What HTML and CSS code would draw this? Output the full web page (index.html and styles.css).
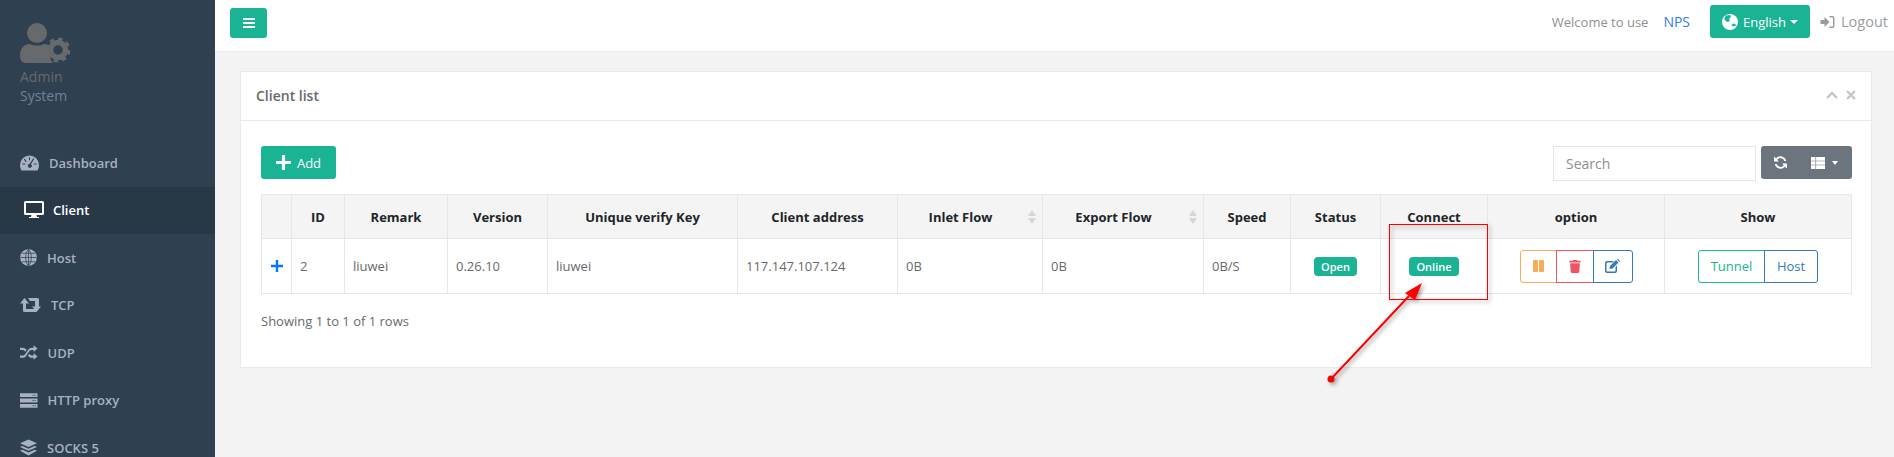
FILE: index.html
```html
<!DOCTYPE html>
<html lang="en">
<head>
  <meta charset="UTF-8" />
  <title>Client list</title>
  <link rel="stylesheet" href="styles.css">
</head>
<body>
  <!-- sidebar -->
  <aside class="sidebar">
    <div class="profile">
      <svg class="logo" viewBox="0 0 50 40">
        <circle cx="17" cy="10" r="10" fill="#676a6c"/>
        <path d="M0 33c0-8 4-12 10-12 4 2 10 2 14 0 3 0 6 1 8 3-3 5-3 11 1 16H6c-4 0-6-3-6-7z" fill="#676a6c"/>
        <circle cx="38" cy="27" r="7.5" fill="none" stroke="#676a6c" stroke-width="5.5"/>
        <circle cx="38" cy="27" r="11" fill="none" stroke="#676a6c" stroke-width="3" stroke-dasharray="4.4 4.2"/>
      </svg>
      <div class="profile-name">Admin</div>
      <div class="profile-role">System</div>
    </div>
    <ul class="menu">
      <li class="menu-item">
        <svg class="menu-icon" viewBox="0 0 20 16"><path fill-rule="evenodd" d="M10 0a10 10 0 0 1 10 10c0 2-.5 4-1.500 6H1.500C.5 14 0 12 0 10A10 10 0 0 1 10 0zM9.500 2v3h1V2zM5 3.500 4 4.200 6 7l1-.7zM15 3.500 11.500 9.300a2 2 0 1 1-1.500-.3L14 3zM2.500 8.500v1h3v-1zM14.500 8.500v1h3v-1z"/></svg>
        <span>Dashboard</span>
      </li>
      <li class="menu-item active">
        <svg class="menu-icon desktop" viewBox="0 0 20 18"><path fill-rule="evenodd" d="M1.500 0h17A1.500 1.500 0 0 1 20 1.500v11a1.500 1.500 0 0 1-1.500 1.500H12.500l.5 2h2v1H5v-1h2l.5-2h-6A1.500 1.500 0 0 1 0 12.500v-11A1.500 1.500 0 0 1 1.500 0zM2 2v10h16V2z"/></svg>
        <span>Client</span>
      </li>
      <li class="menu-item">
        <svg class="menu-icon globe" viewBox="0 0 18 18"><circle cx="9" cy="9" r="8.800"/><path d="M9 .5v17M.5 9h17M2 4.500h14M2 13.500h14M9 .5C5 4 5 14 9 17.500M9 .5c4 3.500 4 13.500 0 17" fill="none" stroke="#2f4050" stroke-width=".8"/></svg>
        <span>Host</span>
      </li>
      <li class="menu-item">
        <svg class="menu-icon retweet" viewBox="0 0 21 14"><path d="M0 5.500 4.500 0 9 5.500H6V11h9l2 3H4.500A1.500 1.500 0 0 1 3 12.500V5.500zM21 8.500 16.500 14 12 8.500h3V3H10L8 0h9.500A1.500 1.500 0 0 1 19 1.500v7z"/></svg>
        <span>TCP</span>
      </li>
      <li class="menu-item">
        <svg class="menu-icon random" viewBox="0 0 18 15"><path d="M14 0l4 3.500L14 7V5h-2c-2 0-3 2-4 3.500S5.500 13 3 13H0v-2.500h3c1.500 0 2.500-1.500 3.500-3S9 2.500 12 2.500h2zM0 2.500h3c1.600 0 2.800 1 3.800 2.200L5.300 6.800C4.600 5.800 3.900 5 3 5H0zM14 8l4 3.500-4 3.500v-2h-2c-1.600 0-2.800-1-3.800-2.200l1.500-2.100c.7 1 1.400 1.800 2.300 1.800h2z"/></svg>
        <span>UDP</span>
      </li>
      <li class="menu-item">
        <svg class="menu-icon server" viewBox="0 0 18 15"><path fill-rule="evenodd" d="M0 0h18v4H0zM13 1.500v1h1v-1zM15 1.500v1h1v-1zM0 5.500h18v4H0zM13 7v1h1V7zM15 7v1h1V7zM0 11h18v4H0zM13 12.500v1h1v-1zM15 12.500v1h1v-1z"/></svg>
        <span>HTTP proxy</span>
      </li>
      <li class="menu-item">
        <svg class="menu-icon layers" viewBox="0 0 18 17"><path d="M9 0l9 4-9 4-9-4zM2.500 6.800 9 9.700l6.500-2.900L18 8l-9 4-9-4zM2.500 10.800 9 13.700l6.500-2.900L18 12l-9 5-9-5z"/></svg>
        <span>SOCKS 5</span>
      </li>
    </ul>
  </aside>

  <div class="main">
    <!-- top bar -->
    <nav class="topbar">
      <button class="btn btn-teal btn-menu">
        <svg class="icon-bars" viewBox="0 0 12 10"><path d="M0 0h12v2H0zM0 4h12v2H0zM0 8h12v2H0z"/></svg>
      </button>
      <div class="topbar-right">
        <span class="welcome">Welcome to use</span>
        <a class="brand-link">NPS</a>
        <button class="btn btn-teal btn-lang">
          <svg class="icon-globe" viewBox="0 0 16 16"><circle cx="8" cy="8" r="8" fill="#fff"/><path d="M4 1.500 8 1l1 2-2 2 1 2-3 1-3-3zM9 11l3-1.500 2.500 1.500-3 1.500z" fill="#1ab394"/></svg>
          <span>English</span>
          <i class="caret"></i>
        </button>
        <a class="logout">
          <svg class="icon-logout" viewBox="0 0 14 12"><path d="M0 4h4V1l5 5-5 5V8H0zM9 0h3a2 2 0 0 1 2 2v8a2 2 0 0 1-2 2H9v-1.500h3a.5.5 0 0 0 .5-.5V2a.5.5 0 0 0-.5-.5H9z"/></svg>
          <span>Logout</span>
        </a>
      </div>
    </nav>

    <div class="content">
      <section class="panel">
        <div class="panel-title">
          <h5>Client list</h5>
          <div class="panel-tools">
            <svg class="tool-icon" viewBox="0 0 12 8"><path d="M1 7l5-5 5 5" fill="none" stroke="#c4c6c8" stroke-width="2.400"/></svg>
            <svg class="tool-icon tool-close" viewBox="0 0 10 10"><path d="M1 1l8 8M9 1l-8 8" fill="none" stroke="#c4c6c8" stroke-width="2.400"/></svg>
          </div>
        </div>
        <div class="panel-body">
          <div class="toolbar">
            <button class="btn btn-teal btn-add">
              <svg class="icon-plus" viewBox="0 0 448 512"><path d="M416 208H272V64c0-17.670-14.330-32-32-32h-32c-17.670 0-32 14.330-32 32v144H32c-17.670 0-32 14.330-32 32v32c0 17.670 14.330 32 32 32h144v144c0 17.670 14.330 32 32 32h32c17.670 0 32-14.330 32-32V304h144c17.670 0 32-14.330 32-32v-32c0-17.670-14.330-32-32-32z"/></svg>
              <span>Add</span>
            </button>
            <div class="toolbar-right">
              <input class="search" type="text" placeholder="Search" />
              <div class="btn-gray">
                <svg class="icon-refresh" viewBox="0 0 14 14"><path d="M12.300 5.500A5.500 5.500 0 0 0 2.800 3L1 1.500V6h4.500L3.900 4.400a3.800 3.800 0 0 1 6.600 1.100zM1.700 8.500a5.500 5.500 0 0 0 9.500 2.500L13 12.500V8H8.500l1.600 1.600a3.800 3.800 0 0 1-6.600-1.100z"/></svg>
                <svg class="icon-columns" viewBox="0 0 14 12"><path d="M0 0h4.500v3.700H0zM5.100 0H14v3.700H5.100zM0 4.200h4.500v3.600H0zM5.100 4.200H14v3.600H5.100zM0 8.300h4.500V12H0zM5.100 8.300H14V12H5.100z"/></svg>
                <i class="caret caret-small"></i>
              </div>
            </div>
          </div>

          <table class="client-table">
            <thead>
              <tr>
                <th class="col-detail"></th>
                <th class="col-id">ID</th>
                <th class="col-remark">Remark</th>
                <th class="col-version">Version</th>
                <th class="col-key">Unique verify Key</th>
                <th class="col-addr">Client address</th>
                <th class="col-inlet sortable">Inlet Flow<i class="sort"></i></th>
                <th class="col-export sortable">Export Flow<i class="sort"></i></th>
                <th class="col-speed">Speed</th>
                <th class="col-status">Status</th>
                <th class="col-connect">Connect</th>
                <th class="col-option">option</th>
                <th class="col-show">Show</th>
              </tr>
            </thead>
            <tbody>
              <tr>
                <td class="cell-detail"><svg class="icon-detail" viewBox="0 0 12 12"><path d="M4.800 0h2.400v4.800H12v2.400H7.200V12H4.800V7.200H0V4.800h4.800z"/></svg></td>
                <td>2</td>
                <td>liuwei</td>
                <td>0.26.10</td>
                <td>liuwei</td>
                <td>117.147.107.124</td>
                <td>0B</td>
                <td>0B</td>
                <td>0B/S</td>
                <td class="cell-center"><span class="badge">Open</span></td>
                <td class="cell-center"><span class="badge">Online</span></td>
                <td class="cell-center">
                  <div class="btn-group">
                    <button class="btn-line line-orange">
                      <svg class="icon-pause" viewBox="0 0 11 12"><path d="M0 1a1 1 0 0 1 1-1h3a1 1 0 0 1 1 1v10a1 1 0 0 1-1 1H1a1 1 0 0 1-1-1zM6 1a1 1 0 0 1 1-1h3a1 1 0 0 1 1 1v10a1 1 0 0 1-1 1H7a1 1 0 0 1-1-1z"/></svg>
                    </button>
                    <button class="btn-line line-red">
                      <svg class="icon-trash" viewBox="0 0 448 512"><path d="M432 32H312l-9.400-18.700A24 24 0 0 0 281.100 0H166.800a23.720 23.720 0 0 0-21.400 13.300L136 32H16A16 16 0 0 0 0 48v32a16 16 0 0 0 16 16h416a16 16 0 0 0 16-16V48a16 16 0 0 0-16-16zM53.200 467a48 48 0 0 0 47.900 45h245.800a48 48 0 0 0 47.900-45L416 128H32z"/></svg>
                    </button>
                    <button class="btn-line line-blue btn-edit">
                      <svg class="icon-edit" viewBox="0 0 15 14"><path d="M2 2h7L7.500 3.500H2.500a1 1 0 0 0-1 1v7a1 1 0 0 0 1 1h7a1 1 0 0 0 1-1V8L12 6.500V12a2 2 0 0 1-2 2H2a2 2 0 0 1-2-2V4a2 2 0 0 1 2-2zM11 1 13.500 3.500 7.500 9.500 4.500 10 5 7zM12 .5l.9-.5L15 2.100 14.400 3z"/></svg>
                    </button>
                  </div>
                </td>
                <td class="cell-center">
                  <div class="btn-group">
                    <button class="btn-line line-teal btn-tunnel">Tunnel</button>
                    <button class="btn-line line-blue btn-host">Host</button>
                  </div>
                </td>
              </tr>
            </tbody>
          </table>

          <div class="table-info">Showing 1 to 1 of 1 rows</div>
        </div>
      </section>
    </div>
  </div>

  <!-- red annotation drawn over the screenshot -->
  <svg class="annotation" viewBox="0 0 1894 457">
    <rect class="mark-box" x="1389.500" y="224.500" width="98" height="75"/>
    <path class="mark-line" d="M1331 379 1409 296"/>
    <path class="mark-head" d="M1422 283 1405 293 1409 296 1415 300z"/>
    <circle class="mark-dot" cx="1331" cy="379" r="3.500"/>
  </svg>
</body>
</html>
```

FILE: styles.css
```css
* {
  box-sizing: border-box;
}
html, body {
  height: 457px;
}
body {
  display: flex;
  margin: 0;
  overflow: hidden;
  position: relative;
  font-family: "Open Sans", "Liberation Sans", sans-serif;
  font-size: 13px;
  color: #676a6c;
  background: #f3f3f4;
}
button {
  font-family: inherit;
}

/* sidebar */
.sidebar {
  width: 215px;
  flex: none;
  background: #2f4050;
}
.profile {
  height: 139px;
  padding: 23px 0 0 20px;
  font-size: 14px;
  line-height: 19px;
}
.logo {
  display: block;
  width: 50px;
  height: 40px;
  margin-bottom: 4px;
}
.profile-name {
  color: #676a6c;
}
.profile-role {
  color: #70829a;
}
.menu {
  list-style: none;
  margin: 0;
  padding: 0;
}
.menu-item {
  display: flex;
  align-items: center;
  gap: 10px;
  height: 47.5px;
  padding-left: 20px;
  font-weight: 600;
  color: #a7b1c2;
}
.menu-item.active {
  gap: 9px;
  background: #293846;
  color: #fff;
  padding-left: 24px;
}
.menu-icon {
  width: 19px;
  height: 16px;
  flex: none;
  fill: currentColor;
}
.desktop {
  width: 20px;
  height: 18px;
}
.globe {
  width: 17px;
  height: 17px;
}
.retweet {
  width: 21px;
  height: 14px;
}
.random, .server {
  width: 17.5px;
  height: 15px;
}
.layers {
  width: 17px;
  height: 17px;
}

/* top bar */
.main {
  flex: 1;
  min-width: 0;
}
.topbar {
  display: flex;
  justify-content: space-between;
  height: 52px;
  padding: 8px 6px 0 15px;
  background: #fff;
  border-bottom: 1px solid #e7eaec;
}
.btn {
  display: flex;
  align-items: center;
  justify-content: center;
  border: none;
  border-radius: 3px;
  color: #fff;
  font-size: 13px;
}
.btn-teal {
  background: #1ab394;
}
.btn-menu {
  width: 37px;
  height: 30px;
}
.icon-bars {
  width: 12px;
  height: 10px;
  fill: #fff;
}
.topbar-right {
  display: flex;
  align-items: center;
  height: 35px;
  margin-top: -4px;
}
.welcome {
  color: #8f8f8f;
}
.brand-link {
  margin: 0 20px 0 15px;
  font-size: 14px;
  color: #2f7df6;
}
.btn-lang {
  width: 100px;
  height: 33px;
  gap: 4px;
  margin-right: 10px;
}
.icon-globe {
  width: 16px;
  height: 16px;
  margin-right: 1px;
}
.caret {
  width: 0;
  height: 0;
  border-top: 4px solid #fff;
  border-left: 4px solid transparent;
  border-right: 4px solid transparent;
}
.caret-small {
  border-left-width: 3.5px;
  border-right-width: 3.5px;
}
.logout {
  display: flex;
  align-items: center;
  gap: 6px;
  font-size: 14.5px;
  color: #999c9e;
}
.icon-logout {
  width: 15px;
  height: 12px;
  fill: #999c9e;
}

/* panel */
.content {
  padding: 19px 22px 0 25px;
}
.panel {
  height: 297px;
  background: #fff;
  border: 1px solid #e7eaec;
}
.panel-title {
  display: flex;
  align-items: center;
  justify-content: space-between;
  height: 49px;
  padding: 0 15px 2px;
  border-bottom: 1px solid #e7eaec;
}
.panel-title h5 {
  margin: 0;
  font-size: 14px;
  font-weight: 600;
  color: #676a6c;
}
.panel-tools {
  display: flex;
  align-items: center;
  gap: 8px;
}
.tool-icon {
  width: 12px;
  height: 8px;
}
.tool-close {
  width: 10px;
  height: 10px;
}
.panel-body {
  padding: 25px 19px 0 20px;
}
.toolbar {
  display: flex;
  justify-content: space-between;
  height: 48px;
}
.btn-add {
  width: 75px;
  height: 33px;
  gap: 6px;
}
.icon-plus {
  width: 15px;
  height: 17px;
  fill: #fff;
}
.toolbar-right {
  display: flex;
  gap: 5px;
}
.search {
  width: 203px;
  height: 35px;
  padding: 0 12px;
  border: 1px solid #e5e6e7;
  font: 14px "Open Sans", sans-serif;
}
.search::placeholder {
  color: #8b8f93;
}
.btn-gray {
  display: flex;
  align-items: center;
  width: 91px;
  height: 33px;
  padding-left: 12px;
  border-radius: 3px;
  background: #6c757d;
}
.icon-refresh {
  width: 15px;
  height: 15px;
  fill: #fff;
  margin-right: 23px;
}
.icon-columns {
  width: 14px;
  height: 12px;
  fill: #fff;
  margin-right: 7px;
}

/* table */
.client-table {
  width: 1590px;
  table-layout: fixed;
  border-collapse: collapse;
  border: 1px solid #e7e7e7;
}
.client-table th, .client-table td {
  border: 1px solid #e7e7e7;
  padding: 0 8px;
}
.client-table th {
  position: relative;
  height: 44px;
  background: #f4f4f4;
  color: #212529;
  font-weight: 700;
  text-align: center;
}
.client-table .sortable {
  padding-right: 27px;
}
.client-table td {
  height: 55px;
}
.col-detail { width: 30px; }
.col-id { width: 53px; }
.col-remark { width: 103px; }
.col-version { width: 100px; }
.col-key { width: 190px; }
.col-addr { width: 160px; }
.col-inlet { width: 145px; }
.col-export { width: 161px; }
.col-speed { width: 87px; }
.col-status { width: 90px; }
.col-connect { width: 107px; }
.col-option { width: 177px; }
.col-show { width: 187px; }

.sort {
  position: absolute;
  top: 15px;
  right: 6px;
  width: 8px;
  height: 15px;
}
.sort::before, .sort::after {
  content: "";
  display: block;
  width: 0;
  height: 0;
  border-left: 4px solid transparent;
  border-right: 4px solid transparent;
}
.sort::before {
  border-bottom: 6px solid #d4d6d8;
  margin-bottom: 2px;
}
.sort::after {
  border-top: 6px solid #d4d6d8;
}
.client-table .cell-detail {
  padding: 0;
}
.icon-detail {
  display: block;
  width: 12px;
  height: 12px;
  margin: 0 auto;
  fill: #007bff;
}
.client-table .cell-center {
  padding: 0;
  text-align: center;
}
.badge {
  display: inline-block;
  padding: 0 7px;
  height: 19px;
  line-height: 19px;
  border-radius: 4px;
  background: #1ab394;
  color: #fff;
  font-size: 11px;
  font-weight: 600;
}
.btn-group {
  display: inline-flex;
  vertical-align: middle;
}
.btn-line {
  display: flex;
  align-items: center;
  justify-content: center;
  width: 38px;
  height: 33px;
  margin-left: -1px;
  padding: 0;
  border: 1px solid;
  background: #fff;
  font-size: 13px;
}
.btn-line:first-child {
  margin-left: 0;
  border-radius: 3px 0 0 3px;
}
.btn-line:last-child {
  border-radius: 0 3px 3px 0;
}
.line-orange {
  width: 37px;
  border-color: #f8ac59;
}
.line-red {
  border-color: #ed5565;
  position: relative;
}
.line-blue {
  border-color: #337ab7;
  color: #337ab7;
  position: relative;
}
.line-teal {
  border-color: #1ab394;
  color: #1ab394;
}
.icon-pause {
  width: 11px;
  height: 12px;
  fill: #f8ac59;
}
.icon-trash {
  width: 12px;
  height: 13px;
  fill: #ed5565;
}
.btn-edit {
  width: 40px;
}
.icon-edit {
  width: 15px;
  height: 14px;
  fill: #337ab7;
}
.btn-tunnel {
  width: 67px;
}
.btn-host {
  width: 54px;
}
.table-info {
  margin-top: 18px;
  line-height: 18px;
}

/* annotation */
.annotation {
  position: absolute;
  top: 0;
  left: 0;
  width: 1894px;
  height: 457px;
  pointer-events: none;
  filter: drop-shadow(2px 2px 2px rgba(0,0,0,0.4));
}
.mark-box {
  fill: none;
  stroke: #f00;
  stroke-width: 1;
}
.mark-line {
  fill: none;
  stroke: #f00;
  stroke-width: 2;
}
.mark-head, .mark-dot {
  fill: #f00;
}
```
